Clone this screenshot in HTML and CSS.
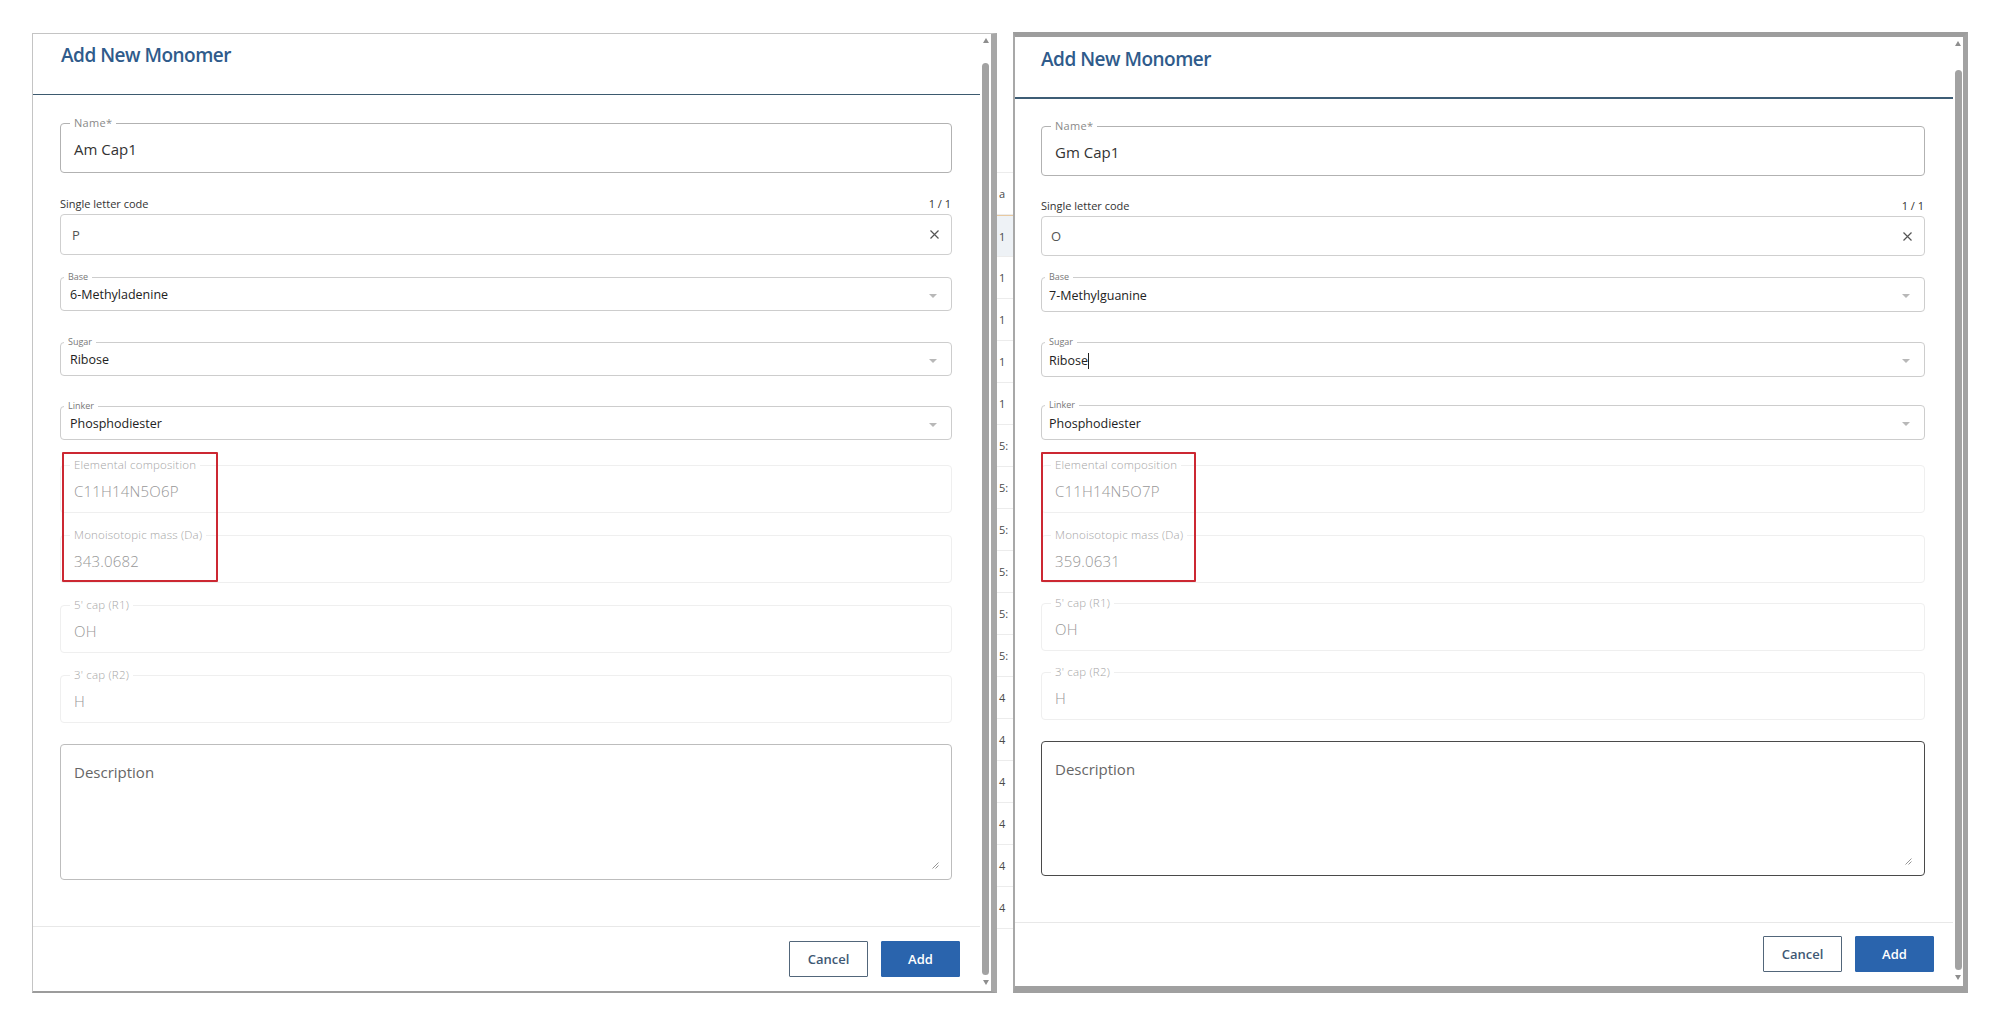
FILE: index.html
```html
<!DOCTYPE html>
<html lang="en">
<head>
<meta charset="utf-8">
<title>Add New Monomer</title>
<link rel="stylesheet" href="styles.css">
</head>
<body>
<div class="page">
  <section class="shot shot-a">
    <div class="main">
      <header class="head"><h2 class="title">Add New Monomer</h2></header>
      <div class="body">
        <div class="field f-name"><span class="flabel">Name*</span><span class="fval">Am Cap1</span></div>
        <div class="slc-row"><span>Single letter code</span><span>1 / 1</span></div>
        <div class="field f-input"><span class="ival">P</span>
          <svg class="clear" width="9" height="9" viewBox="0 0 9 9"><path d="M0.5 0.5L8.5 8.5M8.5 0.5L0.5 8.5" stroke="#555" stroke-width="1.2" fill="none"/></svg>
        </div>
        <div class="field f-select f-base"><span class="slabel">Base</span><span class="sval">6-Methyladenine</span><span class="caret"></span></div>
        <div class="field f-select f-sugar"><span class="slabel">Sugar</span><span class="sval">Ribose</span><span class="caret"></span></div>
        <div class="field f-select f-linker"><span class="slabel">Linker</span><span class="sval">Phosphodiester</span><span class="caret"></span></div>
        <div class="calc-group">
          <div class="field f-ro"><span class="flabel rlabel">Elemental composition</span><span class="rval">C11H14N5O6P</span></div>
          <div class="field f-ro"><span class="flabel rlabel">Monoisotopic mass (Da)</span><span class="rval">343.0682</span></div>
          <div class="mark"></div>
        </div>
        <div class="field f-ro f-cap5"><span class="flabel rlabel">5' cap (R1)</span><span class="rval">OH</span></div>
        <div class="field f-ro f-cap3"><span class="flabel rlabel">3' cap (R2)</span><span class="rval">H</span></div>
        <div class="field f-desc"><span class="placeholder">Description</span>
          <svg class="grip" width="8" height="8" viewBox="0 0 8 8"><path d="M7.5 1.5L1.5 7.5M7.5 4.5L4.5 7.5" stroke="#8a8a8a" stroke-width="0.9" fill="none"/></svg>
        </div>
      </div>
      <footer class="foot"><button class="btn btn-cancel">Cancel</button><button class="btn btn-add">Add</button></footer>
    </div>
    <div class="sbar"><span class="sb-up"></span><span class="sb-thumb"></span><span class="sb-down"></span></div>
  </section>

  <div class="strip">
    <div class="srow srow-top"></div>
    <div class="srow"><span>a</span></div>
    <div class="srow srow-hl"><span>1</span></div>
    <div class="srow"><span>1</span></div>
    <div class="srow"><span>1</span></div>
    <div class="srow"><span>1</span></div>
    <div class="srow"><span>1</span></div>
    <div class="srow"><span>5:</span></div>
    <div class="srow"><span>5:</span></div>
    <div class="srow"><span>5:</span></div>
    <div class="srow"><span>5:</span></div>
    <div class="srow"><span>5:</span></div>
    <div class="srow"><span>5:</span></div>
    <div class="srow"><span>4</span></div>
    <div class="srow"><span>4</span></div>
    <div class="srow"><span>4</span></div>
    <div class="srow"><span>4</span></div>
    <div class="srow"><span>4</span></div>
    <div class="srow"><span>4</span></div>
  </div>

  <section class="shot shot-b">
    <div class="main">
      <header class="head"><h2 class="title">Add New Monomer</h2></header>
      <div class="body">
        <div class="field f-name"><span class="flabel">Name*</span><span class="fval">Gm Cap1</span></div>
        <div class="slc-row"><span>Single letter code</span><span>1 / 1</span></div>
        <div class="field f-input"><span class="ival">O</span>
          <svg class="clear" width="9" height="9" viewBox="0 0 9 9"><path d="M0.5 0.5L8.5 8.5M8.5 0.5L0.5 8.5" stroke="#555" stroke-width="1.2" fill="none"/></svg>
        </div>
        <div class="field f-select f-base"><span class="slabel">Base</span><span class="sval">7-Methylguanine</span><span class="caret"></span></div>
        <div class="field f-select f-sugar"><span class="slabel">Sugar</span><span class="sval">Ribose<i class="cursor"></i></span><span class="caret"></span></div>
        <div class="field f-select f-linker"><span class="slabel">Linker</span><span class="sval">Phosphodiester</span><span class="caret"></span></div>
        <div class="calc-group">
          <div class="field f-ro"><span class="flabel rlabel">Elemental composition</span><span class="rval">C11H14N5O7P</span></div>
          <div class="field f-ro"><span class="flabel rlabel">Monoisotopic mass (Da)</span><span class="rval">359.0631</span></div>
          <div class="mark"></div>
        </div>
        <div class="field f-ro f-cap5"><span class="flabel rlabel">5' cap (R1)</span><span class="rval">OH</span></div>
        <div class="field f-ro f-cap3"><span class="flabel rlabel">3' cap (R2)</span><span class="rval">H</span></div>
        <div class="field f-desc"><span class="placeholder">Description</span>
          <svg class="grip" width="8" height="8" viewBox="0 0 8 8"><path d="M7.5 1.5L1.5 7.5M7.5 4.5L4.5 7.5" stroke="#8a8a8a" stroke-width="0.9" fill="none"/></svg>
        </div>
      </div>
      <footer class="foot"><button class="btn btn-cancel">Cancel</button><button class="btn btn-add">Add</button></footer>
    </div>
    <div class="sbar"><span class="sb-up"></span><span class="sb-thumb"></span><span class="sb-down"></span></div>
  </section>
</div>
</body>
</html>
```

FILE: styles.css
```css
* { box-sizing: border-box; }

html, body {
  margin: 0;
  background: #ffffff;
  font-family: "Open Sans", "Noto Sans", "Liberation Sans", sans-serif;
  color: #333;
}

.page {
  display: flex;
  align-items: flex-start;
  padding-left: 32px;
  height: 1028px;
  overflow: hidden;
}

/* ---------- dialog shots ---------- */
.shot {
  display: flex;
  background: #fff;
  flex: none;
}

.shot-a {
  margin-top: 33px;
  width: 965px;
  height: 960px;
  border-top: 1px solid #c4c4c4;
  border-left: 1px solid #c4c4c4;
  border-right: 6px solid #a7a7a7;
  border-bottom: 2px solid #9c9c9c;
}

.shot-b {
  margin-top: 32px;
  width: 955px;
  height: 961px;
  border-top: 5px solid #9d9d9d;
  border-left: 2px solid #a8a8a8;
  border-right: 5px solid #a2a2a2;
  border-bottom: 7px solid #a0a0a0;
}

.main {
  flex: 1;
  min-width: 0;
  display: flex;
  flex-direction: column;
}

.head {
  flex: none;
  height: 61px;
  border-bottom: 1px solid #3d5a6f;
  padding: 8px 0 0 28px;
}

.shot-b .head {
  height: 62px;
  border-bottom: 2px solid #3e5d75;
  padding: 9px 0 0 26px;
}

.title {
  margin: 0;
  font-size: 19px;
  line-height: 27px;
  font-weight: 600;
  letter-spacing: -0.5px;
  color: #2f5b8b;
}

.body {
  flex: 1;
  display: flex;
  flex-direction: column;
  padding: 28px 28px 0 27px;
}

.shot-b .body {
  padding: 27px 28px 0 26px;
}

/* ---------- fields ---------- */
.field {
  position: relative;
  flex: none;
  border: 1px solid #c9c9c9;
  border-radius: 4px;
  background: #fff;
}

.flabel {
  position: absolute;
  top: -7px;
  left: 9px;
  padding: 0 4px;
  background: #fff;
  font-size: 11px;
  line-height: 12px;
  letter-spacing: 0.3px;
  color: #8a8a8a;
}

.f-name {
  height: 50px;
  border-color: #b2b2b2;
  padding: 2px 13px 0;
  display: flex;
  align-items: center;
}

.fval {
  font-size: 15px;
  color: #333;
}

.slc-row {
  flex: none;
  display: flex;
  justify-content: space-between;
  margin-top: 23px;
  height: 16px;
  line-height: 16px;
  font-size: 11px;
  color: #333;
  padding-right: 1px;
}

.shot-b .slc-row { margin-top: 22px; }

.f-input {
  margin-top: 2px;
  height: 41px;
  border-color: #cfcfcf;
  padding: 0 12px 0 11px;
  display: flex;
  align-items: center;
  justify-content: space-between;
}

.shot-b .f-input { height: 40px; padding-left: 9px; }

.ival {
  font-size: 13px;
  color: #555;
}

.clear { display: block; }

.f-select {
  height: 34px;
  border-color: #cdcdcd;
  padding: 0 14px 0 9px;
  display: flex;
  align-items: center;
  justify-content: space-between;
}

.shot-b .f-select { height: 35px; padding-left: 7px; }

.f-base { margin-top: 22px; }
.f-sugar { margin-top: 31px; }
.f-linker { margin-top: 30px; }

.shot-b .f-base { margin-top: 21px; }
.shot-b .f-sugar { margin-top: 30px; }
.shot-b .f-linker { margin-top: 28px; }

.slabel {
  position: absolute;
  top: -6px;
  left: 3px;
  padding: 0 4px;
  background: #fff;
  font-size: 9px;
  line-height: 10px;
  color: #777;
}

.sval {
  font-size: 12.5px;
  color: #222;
  padding-top: 1px;
}

.cursor {
  display: inline-block;
  width: 1px;
  height: 16px;
  background: #222;
  vertical-align: -4px;
}

.caret {
  width: 0;
  height: 0;
  border-left: 4px solid transparent;
  border-right: 4px solid transparent;
  border-top: 4px solid #b8b8b8;
  margin-top: 3px;
}

/* read-only calculated fields */
.calc-group {
  position: relative;
  flex: none;
  margin-top: 25px;
  display: flex;
  flex-direction: column;
  gap: 22px;
}

.f-ro {
  height: 48px;
  border-color: #efefef;
  padding: 3px 13px 0;
  display: flex;
  align-items: center;
}

.rlabel {
  font-size: 11.5px;
  color: #a6a6a6;
  font-weight: 300;
  letter-spacing: 0.2px;
}

.rval {
  font-size: 15px;
  font-weight: 300;
  color: #979797;
  letter-spacing: 0.2px;
}

.mark {
  position: absolute;
  left: 2px;
  top: -13px;
  width: 156px;
  height: 130px;
  border: 2px solid #cc2832;
  border-radius: 1px;
}

.shot-b .mark {
  left: 0;
  width: 155px;
}

.f-cap5 { margin-top: 22px; }
.f-cap3 { margin-top: 22px; }

.shot-b .f-cap5 { margin-top: 20px; }
.shot-b .f-cap3 { margin-top: 21px; }

.f-desc {
  margin-top: 21px;
  height: 136px;
  border-color: #bdbdbd;
  padding: 17px 13px 0;
}

.shot-b .f-desc {
  height: 135px;
  border-color: #4a4a4a;
}

.placeholder {
  display: block;
  font-size: 15px;
  line-height: 20px;
  color: #666;
}

.grip {
  position: absolute;
  right: 12px;
  bottom: 10px;
}

/* ---------- footer ---------- */
.foot {
  flex: none;
  height: 65px;
  border-top: 1px solid #e8e8e8;
  display: flex;
  justify-content: flex-end;
  align-items: flex-start;
  gap: 13px;
  padding: 14px 20px 0 0;
}

.shot-b .foot {
  height: 64px;
  padding: 13px 19px 0 0;
}

.btn {
  width: 79px;
  height: 36px;
  border-radius: 1px;
  font-family: "Open Sans", "Noto Sans", sans-serif;
  font-size: 13px;
  font-weight: 600;
  cursor: pointer;
}

.btn-cancel {
  background: #fff;
  border: 1px solid #52667a;
  color: #3e5874;
}

.btn-add {
  background: #2a64ad;
  border: 1px solid #2a64ad;
  color: #fff;
}

/* ---------- scrollbar ---------- */
.sbar {
  flex: none;
  width: 11px;
  display: flex;
  flex-direction: column;
  align-items: center;
  padding: 4px 0 6px;
}

.shot-b .sbar { width: 10px; }

.sb-up, .sb-down {
  flex: none;
  width: 0;
  height: 0;
  border-left: 3px solid transparent;
  border-right: 3px solid transparent;
}

.sb-up { border-bottom: 5px solid #8e8e8e; }
.sb-down { border-top: 5px solid #8e8e8e; }

.sb-thumb {
  flex: 1;
  width: 7px;
  margin: 20px 0 5px;
  background: #a2a2a2;
  border-radius: 4px;
}

.shot-b .sb-thumb { margin-top: 24px; }

/* ---------- background strip between shots ---------- */
.strip {
  flex: none;
  width: 16px;
  height: 1028px;
  overflow: hidden;
  display: flex;
  flex-direction: column;
  background: #fff;
}

.srow {
  flex: none;
  height: 42px;
  display: flex;
  align-items: center;
  padding-left: 2px;
  border-bottom: 1px solid #ececec;
  font-size: 11px;
  color: #4a4a4a;
}

.srow-top { height: 173px; }

.srow-hl {
  background: #eef2f6;
  border-top: 1px solid #e8c9a0;
}
```
